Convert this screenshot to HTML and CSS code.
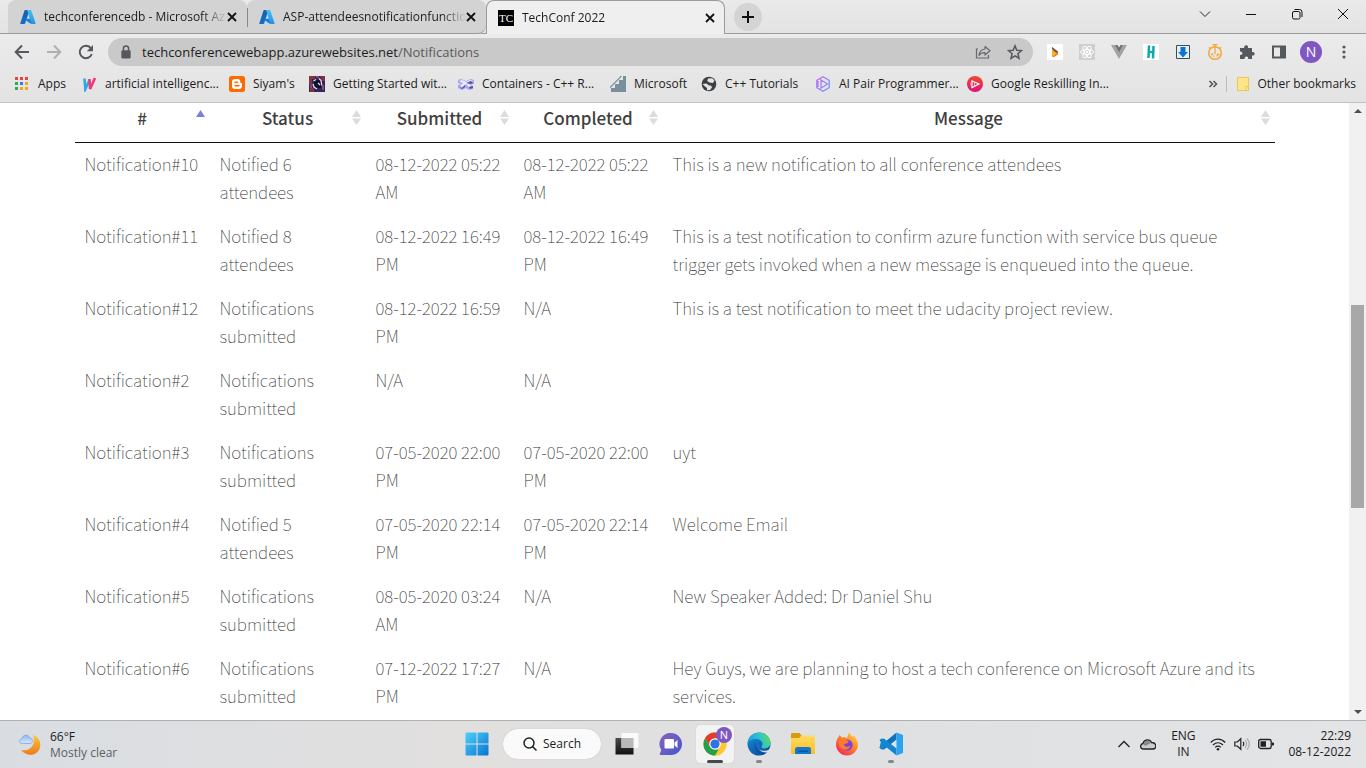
FILE: index.html
```html
<!DOCTYPE html>
<html lang="en">
<head>
<meta charset="utf-8">
<title>TechConf 2022</title>
<link rel="stylesheet" href="styles.css">
</head>
<body>
<svg class="defs" aria-hidden="true">
  <defs>
    <linearGradient id="azA" x1="0" y1="0" x2="0" y2="1"><stop offset="0" stop-color="#1b5fa8"/><stop offset="1" stop-color="#0f6fcf"/></linearGradient>
    <linearGradient id="azB" x1="0" y1="0" x2="0" y2="1"><stop offset="0" stop-color="#40c4f5"/><stop offset="1" stop-color="#2a8fe2"/></linearGradient>
    <linearGradient id="win" x1="0" y1="0" x2="1" y2="1"><stop offset="0" stop-color="#4fd0fb"/><stop offset="1" stop-color="#0673d1"/></linearGradient>
    <linearGradient id="moon" x1="0" y1="0" x2="0" y2="1"><stop offset="0" stop-color="#f9c944"/><stop offset="1" stop-color="#ee7a1c"/></linearGradient>
    <linearGradient id="cloud" x1="0" y1="0" x2="0" y2="1"><stop offset="0" stop-color="#8fb5f0"/><stop offset="1" stop-color="#d8e8fd"/></linearGradient>
    <linearGradient id="chat" x1="0" y1="0" x2="1" y2="1"><stop offset="0" stop-color="#8a62b8"/><stop offset="1" stop-color="#4456cf"/></linearGradient>
    <linearGradient id="edgeA" x1="0" y1="0.5" x2="1" y2="0.2"><stop offset="0" stop-color="#1f9fe0"/><stop offset="0.5" stop-color="#2fc0d4"/><stop offset="1" stop-color="#5fe04c"/></linearGradient>
    <linearGradient id="edgeB" x1="0" y1="0" x2="0.6" y2="1"><stop offset="0" stop-color="#1994dc"/><stop offset="1" stop-color="#0a4fa3"/></linearGradient>
    <linearGradient id="fold" x1="0" y1="0" x2="0" y2="1"><stop offset="0" stop-color="#ffdc62"/><stop offset="1" stop-color="#fbbd24"/></linearGradient>
    <linearGradient id="foxA" x1="1" y1="0" x2="0.2" y2="1"><stop offset="0" stop-color="#ffe74a"/><stop offset="0.45" stop-color="#ff8a2a"/><stop offset="1" stop-color="#f5255a"/></linearGradient>
    <linearGradient id="task" x1="0" y1="0" x2="0" y2="1"><stop offset="0" stop-color="#4a4a4a"/><stop offset="1" stop-color="#111"/></linearGradient>
    <linearGradient id="copilot" x1="0" y1="0" x2="1" y2="1"><stop offset="0" stop-color="#c66cf0"/><stop offset="1" stop-color="#6a9cf8"/></linearGradient>
    <linearGradient id="play" x1="0" y1="0" x2="0" y2="1"><stop offset="0" stop-color="#f04a2c"/><stop offset="1" stop-color="#e0107c"/></linearGradient>
    <symbol id="azure" viewBox="0 0 16 16"><path fill="url(#azA)" d="M5.3 1h4.2L5.2 14.3a.9.9 0 0 1-.8.7H1.2a.8.8 0 0 1-.8-1.1L4.5 1.6A.8.8 0 0 1 5.3 1z"/><path fill="#1380dd" d="M5.1 9.8h6.2l1 5-2-.2-5.6-4.1z"/><path fill="url(#azB)" d="M6.500 1h4a.8.8 0 0 1 .8.6l4.200 12.300a.8.8 0 0 1-.8 1.100h-4.200a.8.8 0 0 0 .7-1.100L7.200 1.600A.8.8 0 0 0 6.500 1z"/></symbol>
    <symbol id="cross" viewBox="0 0 10 10"><path d="M1 1l8 8M9 1L1 9" stroke="#111" stroke-width="1.800" fill="none"/></symbol>
    <symbol id="both" viewBox="0 0 9 15"><path fill="#dcdcdc" d="M4.500 0L9 7H0zM0 8.500h9L4.500 15z"/></symbol>
  </defs>
</svg>

<header class="browser">
  <nav class="tabs" aria-label="Tabs">
    <div class="tab">
      <svg class="fav"><use href="#azure"/></svg>
      <span class="tab-title">techconferencedb - Microsoft Az</span>
      <button class="close" aria-label="Close tab"><svg><use href="#cross"/></svg></button>
    </div>
    <div class="tab divided">
      <svg class="fav"><use href="#azure"/></svg>
      <span class="tab-title">ASP-attendeesnotificationfunctio</span>
      <button class="close" aria-label="Close tab"><svg><use href="#cross"/></svg></button>
    </div>
    <div class="tab active">
      <span class="fav tc">TC</span>
      <span class="tab-title">TechConf 2022</span>
      <button class="close" aria-label="Close tab"><svg><use href="#cross"/></svg></button>
    </div>
    <div class="strip">
      <button class="new-tab" aria-label="New tab"><svg viewBox="0 0 12 12"><path d="M6 0v12M0 6h12" stroke="#111" stroke-width="2"/></svg></button>
      <div class="controls">
        <button aria-label="Search tabs"><svg viewBox="0 0 12 12"><path d="M1 3.500l5 5 5-5" fill="none" stroke="#222"/></svg></button>
        <button aria-label="Minimize"><svg viewBox="0 0 12 12"><path d="M1 6.500h10" stroke="#111"/></svg></button>
        <button aria-label="Restore"><svg viewBox="0 0 12 12"><rect x="1.500" y="3.500" width="7.500" height="7.500" rx="1.500" fill="none" stroke="#111"/><path d="M3.500 1.500h5a2.500 2.500 0 0 1 2.500 2.500v5" fill="none" stroke="#111"/></svg></button>
        <button aria-label="Close"><svg viewBox="0 0 12 12"><path d="M1 1l10 10M11 1L1 11" stroke="#111" fill="none"/></svg></button>
      </div>
    </div>
  </nav>

  <div class="toolbar">
    <div class="nav">
      <button aria-label="Back"><svg viewBox="0 0 16 16"><path d="M15 8H2M8 1.500L1.700 8 8 14.500" fill="none" stroke="#55585c" stroke-width="2"/></svg></button>
      <button aria-label="Forward"><svg viewBox="0 0 16 16"><path d="M1 8h13M8 1.500L14.300 8 8 14.500" fill="none" stroke="#aeb0b2" stroke-width="2"/></svg></button>
      <button aria-label="Reload"><svg viewBox="0 0 16 16"><path d="M13.800 10A6.200 6.200 0 1 1 12.600 3.800L14 5.500" fill="none" stroke="#55585c" stroke-width="2"/><path d="M15 1v6.200H8.800z" fill="#55585c"/></svg></button>
    </div>
    <form class="omnibox">
      <svg class="lock" viewBox="0 0 10 12"><rect x="1" y="4.500" width="8" height="7" rx="1" fill="#55585c"/><path d="M2.800 5V3a2.200 2.200 0 0 1 4.400 0v2" fill="none" stroke="#55585c" stroke-width="1.300"/></svg>
      <label class="url"><span class="host">techconferencewebapp.azurewebsites.net</span><input aria-label="Address" value="/Notifications"></label>
      <button type="button" aria-label="Share"><svg viewBox="0 0 16 16"><path d="M3 5H1.500v9h12v-3" fill="none" stroke="#66696d" stroke-width="1.200"/><path d="M10 2.500l5 4.300-5 4.200V8.600C7 8.500 5.200 9.500 4 11.300 4.500 7.800 6.500 5.500 10 5z" fill="none" stroke="#66696d" stroke-width="1.200" stroke-linejoin="round"/></svg></button>
      <button type="button" aria-label="Bookmark this page"><svg viewBox="0 0 16 16"><path d="M8 1.800l1.800 4.400 4.700.4-3.600 3.100 1.100 4.600L8 11.800l-4 2.500 1.100-4.600-3.600-3.100 4.700-.4z" fill="none" stroke="#55585c" stroke-width="1.500"/></svg></button>
    </form>
    <div class="extensions">
      <button aria-label="Power Automate"><svg viewBox="0 0 16 16"><path fill="#fff" d="M0 0h16v16H0z"/><path fill="#f6b32b" d="M5 3l6 5.500L5 13z"/><path fill="#7a4b45" d="M5 3l6 4.500v2L8 8 5 5z"/><path fill="#e97f1d" d="M5 13l6-5v2.500L7 13z"/></svg></button>
      <button aria-label="React Developer Tools"><svg viewBox="0 0 16 16"><path fill="#cfcfcf" d="M0 0h16v16H0z"/><g fill="none" stroke="#fff"><ellipse cx="8" cy="8" rx="6.500" ry="2.500"/><ellipse cx="8" cy="8" rx="6.500" ry="2.500" transform="rotate(60 8 8)"/><ellipse cx="8" cy="8" rx="6.500" ry="2.500" transform="rotate(120 8 8)"/></g><circle cx="8" cy="8" r="1.300" fill="#fff"/></svg></button>
      <button aria-label="Vue Devtools"><svg viewBox="0 0 16 16"><path fill="#a3a3a3" d="M0 1h4l4 7 4-7h4L8 15z"/><path fill="#6d7073" d="M4 1h2.500L8 3.600 9.500 1H12L8 8.500z"/></svg></button>
      <button aria-label="Honey"><svg viewBox="0 0 16 16"><path fill="#fff" d="M0 0h16v16H0z"/><path d="M6 1.500L5.500 14M10.500 2L10 14.500M5.500 8h5" stroke="#10a9ab" stroke-width="2.500"/></svg></button>
      <button aria-label="Downloader"><svg viewBox="0 0 16 16"><path fill="#e8edf0" stroke="#35505e" d="M1.500 1.500h13v13h-13z"/><path fill="#0b76cf" d="M5.500 3h5v5H13l-5 5.500L3 8h2.500z"/></svg></button>
      <button aria-label="Timer"><svg viewBox="0 0 16 16"><circle cx="8" cy="9" r="6.300" fill="none" stroke="#f4a53a" stroke-width="1.500"/><path d="M5.500.7h5M8 1v6M2 3.200l1.300 1.200M14 3.200l-1.300 1.200M8 6v4M4 10.500l2-.5M6 12.500l1-1M10 12.500l.5-2 2 0" stroke="#f4a53a" stroke-width="1.300" fill="none"/></svg></button>
      <button aria-label="Extensions"><svg viewBox="0 0 16 16"><path fill="#55585c" d="M1 4h4.200C4.600 1 9 .2 9 3v1h4v4h.8c2.500 0 2.500 3.600 0 3.600H13V15H9.200c.4-3.200-3.900-3.200-3.600 0H1v-4c3.200.3 3.200-3.700 0-3.500z"/></svg></button>
      <button aria-label="Side panel"><svg viewBox="0 0 16 16"><path fill="none" stroke="#55585c" stroke-width="2" d="M2 2.500h12v11H2z"/><path fill="#55585c" d="M9 2h5v12H9z"/></svg></button>
      <button class="avatar" aria-label="Profile">N</button>
      <button class="menu" aria-label="Menu"><svg viewBox="0 0 4 16"><circle cx="2" cy="3" r="1.600" fill="#55585c"/><circle cx="2" cy="8" r="1.600" fill="#55585c"/><circle cx="2" cy="13" r="1.600" fill="#55585c"/></svg></button>
    </div>
  </div>

  <nav class="bookmarks" aria-label="Bookmarks">
    <a href="#"><svg viewBox="0 0 16 16"><path fill="#ea4335" d="M1 1h3v3H1zM6 1h3v3H6zM11 1h3v3h-3z"/><path fill="#34a853" d="M1 6h3v3H1zM1 11h3v3H1z"/><path fill="#2d7ff0" d="M6 6h3v3H6z"/><path fill="#f4a71d" d="M11 6h3v3h-3zM6 11h3v3H6zM11 11h3v3h-3z"/></svg>Apps</a>
    <a href="#"><svg viewBox="0 0 16 16"><path d="M3.500 2.500L4.300 13 8.500 4" fill="none" stroke="#29a9e8" stroke-width="2.600"/><path d="M8.500 3l.6 10 4.900-11" fill="none" stroke="#f03a78" stroke-width="2.600"/></svg>artificial intelligenc...</a>
    <a href="#"><svg viewBox="0 0 16 16"><rect width="16" height="16" rx="2.500" fill="#ff6a00"/><path fill="#fff" d="M6 3h2.500A2.800 2.800 0 0 1 11.300 6c0 1 .3 1 1 1 .4 0 .7.300.7.700V10a3 3 0 0 1-3 3H6a3 3 0 0 1-3-3V6a3 3 0 0 1 3-3z"/><path d="M6 6.200h2.500M6 9.800h4" stroke="#ff6a00" stroke-width="1.400" stroke-linecap="round"/></svg>Siyam's</a>
    <a href="#"><svg viewBox="0 0 16 16"><path fill="#35245d" d="M0 0h16v16H0z"/><path fill="#7d3542" d="M0 0h6v3H3v6H0zM11 0h5v5h-3zM1 12h4v4H1z"/><path fill="#11112e" d="M5 4h7v8H5z"/><path d="M7 3.500L4.500 5M4 8l1 3 3 2M10 2.500l2 2 .8 5M9 7l2 2" fill="none" stroke="#e8dce5" stroke-width="1.300"/><path d="M2 9v3M7 1h3M14 9v5" stroke="#c68072"/></svg>Getting Started wit...</a>
    <a href="#"><svg viewBox="0 0 16 16"><path fill="#a9a6f3" d="M0 4l3-1 5 2 5-2 3 1v4l-3 1 2 2v2l-4 1-3-2-4 2-4-2V9l3-1-3-1z"/><path fill="#eeedff" d="M1 5l3-1 4 2 4-2 3 1-4 2 2 3-2 1-3-3-4 3-2-1 3-3z"/><path fill="#554f9a" d="M8 7l5-2 2 2-3 1zM1 11l3 1 3-3v2l-3 2zM11 11l4-1v2l-3 1z"/></svg>Containers - C++ R...</a>
    <a href="#"><svg viewBox="0 0 16 16"><path fill="#78909c" d="M16 0v16H1v-4h4V8h4V4h4V0z"/><path d="M0 11.500L11.500 0" stroke="#78909c" stroke-width="1.200"/></svg>Microsoft</a>
    <a href="#"><svg viewBox="0 0 16 16"><circle cx="8" cy="8" r="7.300" fill="#3c4043"/><path fill="#e4e4e4" d="M7 2.500l4-.2 2.500 2L12 7 8.500 6.500 6.200 5zM1.500 8l4-.5L8 9.500h2l1 2-2 2.500-3 .2L6 12l-2-1.500z"/></svg>C++ Tutorials</a>
    <a href="#"><svg viewBox="0 0 16 16"><path fill="none" stroke="url(#copilot)" stroke-width="1.300" d="M8 .8l6.200 3.600v7.200L8 15.200l-6.200-3.600V4.400zM6 4l6.500 4L6 12zM3 5v6"/></svg>AI Pair Programmer...</a>
    <a href="#"><svg viewBox="0 0 16 16"><circle cx="8" cy="8" r="8" fill="url(#play)"/><path d="M5 5l7 3-7 3.500z" fill="none" stroke="#fff" stroke-width="1.200"/><path d="M7.500 6.500v3.500M4 6.500v3" stroke="#ffc0c8"/></svg>Google Reskilling In...</a>
    <button class="more" aria-label="More bookmarks"><svg viewBox="0 0 10 10"><path d="M1.500 2l3 3-3 3M5.500 2l3 3-3 3" fill="none" stroke="#55585c" stroke-width="1.600"/></svg></button>
    <a class="other" href="#"><svg viewBox="0 0 16 16"><path d="M2.500 1.500h11v13h-11z" fill="#ffe58a" stroke="#e9c75a"/><path d="M11 10.500h2.500v4H11z" fill="#ffe58a" stroke="#e9c75a"/></svg>Other bookmarks</a>
  </nav>
</header>

<div class="viewport">
  <main class="page">
    <table class="grid">
      <colgroup><col class="c-id"><col class="c-status"><col class="c-submitted"><col class="c-completed"><col></colgroup>
      <thead>
        <tr>
          <th aria-sort="ascending"><button>#<svg viewBox="0 0 9 15"><path fill="#7b80dc" d="M4.500 0L9 7H0z"/></svg></button></th>
          <th><button>Status<svg><use href="#both"/></svg></button></th>
          <th><button>Submitted<svg><use href="#both"/></svg></button></th>
          <th><button>Completed<svg><use href="#both"/></svg></button></th>
          <th><button>Message<svg><use href="#both"/></svg></button></th>
        </tr>
      </thead>
      <tbody>
        <tr><td>Notification#10</td><td>Notified 6 attendees</td><td>08-12-2022 05:22 AM</td><td>08-12-2022 05:22 AM</td><td>This is a new notification to all conference attendees</td></tr>
        <tr><td>Notification#11</td><td>Notified 8 attendees</td><td>08-12-2022 16:49 PM</td><td>08-12-2022 16:49 PM</td><td>This is a test notification to confirm azure function with service bus queue trigger gets invoked when a new message is enqueued into the queue.</td></tr>
        <tr><td>Notification#12</td><td>Notifications submitted</td><td>08-12-2022 16:59 PM</td><td>N/A</td><td>This is a test notification to meet the udacity project review.</td></tr>
        <tr><td>Notification#2</td><td>Notifications submitted</td><td>N/A</td><td>N/A</td><td></td></tr>
        <tr><td>Notification#3</td><td>Notifications submitted</td><td>07-05-2020 22:00 PM</td><td>07-05-2020 22:00 PM</td><td>uyt</td></tr>
        <tr><td>Notification#4</td><td>Notified 5 attendees</td><td>07-05-2020 22:14 PM</td><td>07-05-2020 22:14 PM</td><td>Welcome Email</td></tr>
        <tr><td>Notification#5</td><td>Notifications submitted</td><td>08-05-2020 03:24 AM</td><td>N/A</td><td>New Speaker Added: Dr Daniel Shu</td></tr>
        <tr><td>Notification#6</td><td>Notifications submitted</td><td>07-12-2022 17:27 PM</td><td>N/A</td><td>Hey Guys, we are planning to host a tech conference on Microsoft Azure and its services.</td></tr>
      </tbody>
    </table>
  </main>
  <div class="scrollbar">
    <svg viewBox="0 0 8 4"><path d="M4 0l4 4H0z" fill="#505050"/></svg>
    <div class="track"><div class="thumb"></div></div>
    <svg viewBox="0 0 8 4"><path d="M0 0h8L4 4z" fill="#505050"/></svg>
  </div>
</div>

<footer class="taskbar">
  <button class="weather">
    <svg viewBox="0 0 24 24"><path fill="url(#moon)" d="M15 2c6 2 9 8 6.500 14-3 7-13 8-18.500 1 10 2 15-6 12-15z"/><path fill="url(#cloud)" stroke="#7fa3e6" stroke-width=".8" d="M4.500 10.500C.5 10.500.5 6 4 6c.5-5 7-5 7.500-1C15 4.500 15.500 10.500 12 10.500z"/></svg>
    <span><b>66°F</b><small>Mostly clear</small></span>
  </button>
  <div class="apps">
    <button class="app" aria-label="Start"><svg viewBox="0 0 24 24"><path fill="url(#win)" d="M1.500.5h10v11h-11v-10a1 1 0 0 1 1-1zM12.500.5h10a1 1 0 0 1 1 1v10h-11zM.5 12.500h11v11h-10a1 1 0 0 1-1-1zM12.500 12.500h11v10a1 1 0 0 1-1 1h-10z"/></svg></button>
    <button class="search"><svg viewBox="0 0 14 14"><circle cx="6" cy="6" r="5" fill="none" stroke="#222" stroke-width="1.500"/><path d="M9.600 9.600L13.500 13.500" stroke="#222" stroke-width="1.500"/></svg>Search</button>
    <button class="app" aria-label="Task view"><svg viewBox="0 0 24 24"><path fill="url(#task)" d="M.5 6h18v16.500H.5z"/><path fill="#fafafa" d="M6.500 1h17v15h-17z"/><path fill="#b9b9b9" d="M6.500 6h12v10h-12z"/></svg></button>
    <button class="app" aria-label="Chat"><svg viewBox="0 0 24 24"><path fill="url(#chat)" d="M12 1a11 11 0 1 1 0 22H1.500c-.8 0-1-.6-.6-1.300L2.300 18A11 11 0 0 1 12 1z"/><rect x="5.500" y="7" width="9.500" height="9.500" rx="1" fill="#fff"/><path fill="#fff" d="M15.500 10.500L18.500 8v8l-3-2.500z"/></svg></button>
    <button class="app open current" aria-label="Chrome"><svg viewBox="0 0 24 24"><circle cx="12" cy="12" r="11.500" fill="#ffc82e"/><path fill="#e33b2e" d="M2 6.300A11.500 11.500 0 0 1 22 6.300H12L7 15z"/><path fill="#22a04b" d="M2 6.300L7 14.900 12 17.500l-1.500 6A11.500 11.500 0 0 1 2 6.300zM12 17.500h5L12 23.500h-2z"/><path fill="#ffc82e" d="M12 6.300h10A11.500 11.500 0 0 1 12 23.500l5-8.600z"/><circle cx="12" cy="12" r="5.800" fill="#fff"/><circle cx="12" cy="12" r="4.600" fill="#2c74e4"/></svg><span class="badge">N</span></button>
    <button class="app open" aria-label="Edge"><svg viewBox="0 0 24 24"><circle cx="12" cy="12" r="11.500" fill="url(#edgeB)"/><path fill="url(#edgeA)" d="M.6 11C1.500 4.500 6.500.5 12 .5c6.500 0 11.500 5 11.500 10 0 6.500-9 7.500-9 4.500 0-1 1-1.500 1-3.500C15 8 11 6.800 8 7 4.500 7.200 2 8.500.6 11z"/><path fill="#083f88" opacity=".6" d="M8 10c-2 6 2 12 9 12.300A11.500 11.500 0 0 1 8 10z"/><path fill="#dfe1e4" d="M11.300 12c-1.600 4 2 7 6.500 6.800 2 0 3.600-.8 5.200-1.800l1 2-1.500 1c-6 2-12.700-2-11.200-8z"/></svg></button>
    <button class="app" aria-label="File Explorer"><svg viewBox="0 0 24 24"><path fill="#d99b0e" d="M1 1h7.500l2 2.500V7H0V2a1 1 0 0 1 1-1z"/><path fill="url(#fold)" d="M0 6h8l2.500-2.500H23a1 1 0 0 1 1 1V22H0z"/><path fill="#1278cc" d="M4 22v-4.500A2.500 2.500 0 0 1 6.500 15h11a2.500 2.500 0 0 1 2.500 2.500V22z"/><path fill="#0a55a0" d="M7 18.500h10v1.500H7z"/></svg></button>
    <button class="app" aria-label="Firefox"><svg viewBox="0 0 24 24"><path fill="url(#foxA)" d="M3.500 5l.8-2L7 5.500 9.500 5 12 6l2-5.500c1 2 2.500 3 3.500 4.500l1-1.500c2 2 4.500 5.500 4.500 9A11 11 0 1 1 1 12.500C1 9.500 2 7 3.500 5z"/><circle cx="12" cy="13" r="5.600" fill="#7c3fe0"/><path fill="#ff7b2b" d="M3 8c3-2 6-1.500 8 0l3 1-2 2.500-3 .5c0 3 4 3.500 6.500 2C14 19 6 19 4 13z"/></svg></button>
    <button class="app open" aria-label="Visual Studio Code"><svg viewBox="0 0 24 24"><path fill="#0b74bd" d="M.5 8.200L2.500 6.500l4 3L17.500.5v7L5 17.500l-2.500-.2-2-1.800L4 12z"/><path fill="#1287d0" d="M.5 15.800l2 1.700 4-3 11 9v-7L5 6.500l-2.500.2z"/><path fill="#2aa4f0" d="M17.500.5L24 3v18l-6.500 2.500z"/></svg></button>
  </div>
  <div class="tray">
    <button aria-label="Show hidden icons"><svg viewBox="0 0 16 16"><path d="M2.500 11L8 5.500l5.500 5.500" fill="none" stroke="#222" stroke-width="1.300"/></svg></button>
    <button aria-label="OneDrive"><svg viewBox="0 0 16 16"><path d="M3.500 13C-.3 13-.2 8 3 7.500 4 3 10 2.500 11.500 6.500 17 6.500 17 13 13 13z" fill="#ccc" stroke="#222" stroke-width="1.300"/><path d="M3.500 8C5 4 9 3.500 11 7L5 10z" fill="#888"/></svg></button>
    <button class="lang"><span>ENG</span><span>IN</span></button>
    <button class="status" aria-label="Network, volume and battery">
      <svg viewBox="0 0 16 16"><path d="M.8 6.500c4-4.500 10.400-4.500 14.400 0M3 9c3-3 7-3 10 0M5.200 11.300c1.600-1.700 4-1.700 5.600 0" fill="none" stroke="#222" stroke-width="1.200"/><circle cx="8" cy="13.200" r="1.300" fill="#222"/></svg>
      <svg viewBox="0 0 16 16"><path d="M.8 6v4h2.500l3.500 3.300V2.700L3.300 6z" fill="none" stroke="#222" stroke-width="1.200"/><path d="M9 6c1 1 1 3 0 4" fill="none" stroke="#222" stroke-width="1.200"/><path d="M11 4c2 2.500 2 5.500 0 8M13 2.500c3 3.500 3 7.500 0 11" fill="none" stroke="#aaa" stroke-width="1.200"/></svg>
      <svg viewBox="0 0 16 16"><rect x=".7" y="3.500" width="12.500" height="9" rx="2" fill="none" stroke="#222" stroke-width="1.300"/><path fill="#222" d="M2.500 5.300h5.500v5.400H2.500zM14 6.500h1.200a.8.8 0 0 1 .8.800v1.400a.8.8 0 0 1-.8.800H14z"/></svg>
    </button>
    <button class="clock"><span>22:29</span><span>08-12-2022</span></button>
  </div>
</footer>
</body>
</html>
```

FILE: styles.css
```css
* { box-sizing: border-box; }

body {
  margin: 0;
  height: 100vh;
  display: flex;
  flex-direction: column;
  overflow: hidden;
  background: #fff;
  color: #1c1c1c;
  font: 12px/16px "Open Sans", "Noto Sans", sans-serif;
}

button {
  display: flex;
  align-items: center;
  justify-content: center;
  padding: 0;
  border: 0;
  background: none;
  color: inherit;
  font: inherit;
}

svg { flex: none; width: 16px; height: 16px; }
.defs { position: absolute; width: 0; height: 0; }

/* Tabs */
.browser { flex: none; background: linear-gradient(#efefef, #e3e3e3); border-bottom: 1px solid #c2c2c2; }
.tabs { display: flex; height: 34px; padding-left: 8px; background: linear-gradient(#eaeaea, #e3e3e3); box-shadow: inset 0 -1px #9b9b9b; }
.tab {
  display: flex;
  align-items: center;
  flex: 0 1 239px;
  min-width: 0;
  padding: 0 10px 0 12px;
  border-radius: 8px 8px 0 0;
  background: #d3d3d3;
  box-shadow: inset 0 -1px #9b9b9b;
}
.divided { border-radius: 8px 8px 8px 0; background: linear-gradient(#888, #888) 0 8px / 1px 19px no-repeat, #d3d3d3; }
.active { background: #efefef; border: 1px solid #9b9b9b; border-bottom: 0; box-shadow: none; padding: 0 9px 0 11px; }
.fav { flex: none; width: 16px; height: 16px; margin-right: 8px; }
.tc { background: #000; color: #fff; font: 11px/16px "Liberation Serif", serif; text-align: center; }
.tab-title {
  flex: 1;
  overflow: hidden;
  white-space: nowrap;
  mask-image: linear-gradient(to right, #000 calc(100% - 24px), transparent);
}
.close { flex: none; width: 10px; height: 16px; }
.close svg { width: 10px; height: 10px; }
.strip { flex: 1; display: flex; align-items: center; justify-content: space-between; padding-left: 9px; }
.new-tab { width: 28px; height: 28px; border-radius: 50%; background: #d4d4d4; }
.new-tab svg { width: 12px; height: 12px; }
.controls { display: flex; align-self: flex-start; height: 28px; }
.controls button { width: 46px; }
.controls svg { width: 12px; height: 12px; }

/* Toolbar */
.toolbar { display: flex; align-items: center; height: 36px; }
.nav { display: flex; gap: 16px; padding: 0 14px; }
.omnibox { flex: 1; display: flex; align-items: center; gap: 16px; height: 28px; padding: 0 10px; border-radius: 14px; background: #c9c9c9; }
.lock { width: 16px; height: 14px; margin-right: -8px; }
.url { flex: 1; display: flex; font-size: 13px; line-height: 20px; min-width: 0; }
.url input { flex: 1; min-width: 0; padding: 0; border: 0; background: none; color: #5a5a5a; font: inherit; outline: 0; }
.extensions { display: flex; align-items: center; gap: 16px; padding: 0 20px 0 14px; }
.avatar { width: 22px; height: 22px; margin: 0 4px 0 -3px; border-radius: 50%; background: #7e57c2; color: #fff; font-size: 14px; }
.menu svg { width: 4px; }

/* Bookmarks */
.bookmarks {
  display: grid;
  grid-template-columns: 67px 148px 80px 149px 152px 91px 114px 152px 140px 1fr auto;
  height: 32px;
  padding: 0 10px 4px 14px;
  align-items: center;
  white-space: nowrap;
}
.bookmarks a { display: flex; align-items: center; gap: 8px; color: inherit; text-decoration: none; }
.more { justify-self: end; margin-right: 8px; }
.more svg { width: 10px; height: 10px; }
.bookmarks .other { gap: 6px; padding-left: 8px; border-left: 1px solid #bdbdbd; }

/* Page */
.viewport { flex: 1; display: flex; min-height: 0; }
.page { flex: 1; overflow: hidden; }
.grid {
  width: 1200px;
  max-width: 100%;
  margin: 0 auto;
  border-collapse: separate;
  border-spacing: 0;
  table-layout: fixed;
  color: #303030;
  font: 100 17px/28px "Noto Sans CJK SC", sans-serif;
}
.c-id { width: 135px; }
.c-status { width: 156px; }
.c-submitted { width: 148px; }
.c-completed { width: 149px; }
.grid th { padding: 0 0 10px; border-bottom: 1px solid #111; color: #404040; }
.grid th button { position: relative; width: 100%; font-weight: 500; line-height: 29px; }
.grid th svg { position: absolute; top: 7px; right: 5px; width: 9px; height: 15px; }
.grid td { padding: 7px 10px 9px; vertical-align: top; }

.scrollbar { display: flex; flex-direction: column; align-items: center; width: 17px; padding: 6px 0; background: #f1f1f1; }
.scrollbar svg { width: 8px; height: 4px; }
.track { flex: 1; align-self: stretch; padding: 0 2px; }
.thumb { height: 34%; margin-top: 192px; background: #a8a8a8; }

/* Taskbar */
.taskbar {
  flex: none;
  display: grid;
  grid-template-columns: 1fr auto 1fr;
  align-items: center;
  height: 48px;
  border-top: 1px solid #b0b0b0;
  background: linear-gradient(90deg, #d9dde2, #e2e0df 35%, #dfe0e2 60%, #e2e4e6);
}
.weather { justify-self: start; gap: 8px; padding-left: 18px; text-align: left; }
.weather svg { width: 24px; height: 24px; }
.weather b, .weather small { display: block; font-weight: 400; font-size: 12px; }
.weather small { color: #5c5f63; }
.apps { display: flex; align-items: center; gap: 6px; padding: 0 0 2px 2px; }
.app { position: relative; width: 38px; height: 38px; border-radius: 4px; }
.app svg { width: 24px; height: 24px; }
.search { gap: 6px; width: 98px; height: 30px; margin: 0 1px; border-radius: 15px; background: #fafafa; box-shadow: 0 0 1px #aaa; }
.search svg { width: 14px; height: 14px; }
.current { background: #f3f3f4; box-shadow: 0 0 1px #aaa; }
.open::after { content: ""; position: absolute; bottom: 0; left: 50%; width: 6px; height: 3px; margin-left: -3px; border-radius: 2px; background: #85878a; }
.current::after { width: 16px; margin-left: -8px; background: #48494b; }
.badge { position: absolute; top: 2px; right: 2px; width: 16px; height: 16px; border-radius: 50%; background: #7e57c2; color: #fff; font-size: 11px; }
.tray { justify-self: end; display: flex; align-items: center; gap: 8px; padding: 0 15px 2px 0; }
.lang { flex-direction: column; width: 38px; }
.status { gap: 8px; }
.clock { flex-direction: column; align-items: flex-end; margin-left: 6px; }
```
